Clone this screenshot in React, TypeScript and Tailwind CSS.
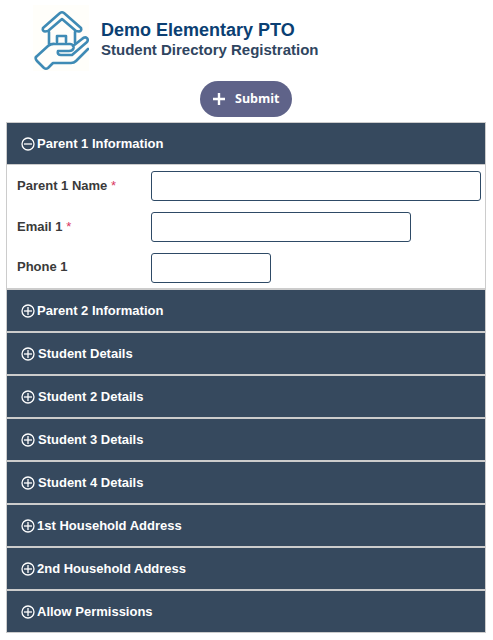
import React from "react";

function Sign({ open }: { open?: boolean }) {
  return (
    <svg width="14" height="14" viewBox="0 0 14 14" fill="none" stroke="#fff" strokeWidth="1.3" className="shrink-0">
      <circle cx="7" cy="7" r="6" />
      <path d="M3 7h8" />
      {!open && <path d="M7 3v8" />}
    </svg>
  );
}

function Logo() {
  return (
    <div className="w-[56px] h-[66px] bg-[#fffefa] shrink-0">
      <svg width="56" height="66" viewBox="-1 0 56 66" fill="none" stroke="#3f8bb5" strokeWidth="2.6" strokeLinejoin="round" strokeLinecap="round">
        <path d="M9 23 L26 8 Q28 6.5 30 8 L47 23 Q48 26 45 26.5 L42 26 L28 14 L14 26 L11 26.5 Q8 26 9 23Z" />
        <path d="M15 27 V39 M41 27 V38" />
        <path d="M23 37 V31 H32 V37" />
        <path d="M2 52 L14 41 Q17 38.5 21 39 L36 39 Q40 39.5 39.5 43 Q39 46 35 46 L25 46 M24 46 Q23 50 27 50 L38 50 L53 37 Q55 34 52 32.5 Q50 32 48 34 L39 41" />
        <path d="M2 52 Q1 54 3 56 L10 63 Q12 64.5 14 63 L19 58 L37 58 Q40 58 42 56 L54 44" />
      </svg>
    </div>
  );
}

function Header({ title, open, tight }: { title: string; open?: boolean; tight?: boolean }) {
  return (
    <div className={`h-[41px] bg-[#36495e] flex items-center pl-[14px] ${tight ? "gap-[2px]" : "gap-[3px]"}`}>
      <Sign open={open} />
      <span className="text-white font-bold text-[13px] pt-[1px]">{title}</span>
    </div>
  );
}

function Field({ label, req, width }: { label: string; req?: boolean; width: string }) {
  return (
    <div className="flex items-center h-[41px]">
      <label className="w-[144px] pl-[10px] pb-[1px] text-[13px] font-bold text-[#3a3a3a] shrink-0">
        {label}
        {req && <span className="text-[#d9365f] font-normal"> *</span>}
      </label>
      <input className={`${width} h-[30px] rounded-[3px] border border-[#2e4a66] bg-white`} />
    </div>
  );
}

const closed: [string, boolean][] = [
  ["Parent 2 Information", true],
  ["Student Details", false],
  ["Student 2 Details", false],
  ["Student 3 Details", false],
  ["Student 4 Details", false],
  ["1st Household Address", true],
  ["2nd Household Address", true],
  ["Allow Permissions", true],
];

export default function App() {
  return (
    <div className="w-[493px] h-[640px] bg-white overflow-hidden font-['Liberation_Sans',sans-serif]">
      <div className="h-[81px] flex pl-[33px] pt-[5px]">
        <Logo />
        <div className="ml-[12px] mt-[14px]">
          <div className="text-[18px] leading-[22px] font-bold text-[#0b3f73]">Demo Elementary PTO</div>
          <div className="text-[15px] leading-[18px] font-bold text-[#2f4560]">Student Directory Registration</div>
        </div>
      </div>
      <div className="flex justify-center h-[41px] pr-[1px]">
        <button className="w-[92px] h-[36px] rounded-[18px] bg-[#5f6389] flex items-center pl-[13px] gap-[10px] text-white">
          <svg width="12" height="12" viewBox="0 0 12 12" stroke="#fff" strokeWidth="2.4"><path d="M0 6h12M6 0v12" /></svg>
          <span className="text-[12.5px] font-bold font-['Open_Sans',sans-serif]">Submit</span>
        </button>
      </div>
      <div className="ml-[6px] w-[480px] border-x border-y border-[#cccccc] flex flex-col">
        <Header title="Parent 1 Information" open tight />
        <div className="h-[124px] bg-white flex flex-col pt-[1px] border-t border-[#cccccc]">
          <Field label="Parent 1 Name" req width="w-[330px]" />
          <Field label="Email 1" req width="w-[260px]" />
          <Field label="Phone 1" width="w-[120px]" />
        </div>
        {closed.map(([t, tight]) => (
          <div key={t} className="border-t-2 border-[#cccccc]">
            <Header title={t} tight={tight} />
          </div>
        ))}
      </div>
    </div>
  );
}
